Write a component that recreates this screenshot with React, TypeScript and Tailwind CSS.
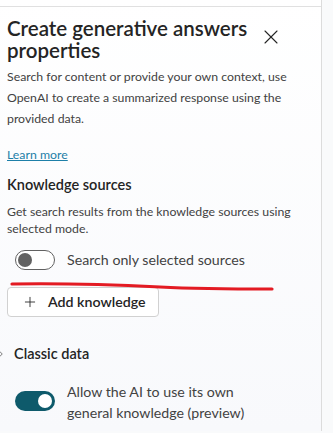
import { X, Plus, ChevronRight } from "lucide-react";

function Toggle({ on }: { on: boolean }) {
  return on ? (
    <span className="flex h-5 w-10 shrink-0 items-center justify-end rounded-full bg-[#0e5a6b] px-[3px]">
      <span className="size-[14px] rounded-full bg-white" />
    </span>
  ) : (
    <span className="flex h-5 w-10 shrink-0 items-center rounded-full border border-[#616161] bg-white px-[2px]">
      <span className="size-[14px] rounded-full bg-[#616161]" />
    </span>
  );
}

export default function App() {
  return (
    <div className="flex h-[433px] w-[333px] overflow-hidden bg-[#f9fafb] font-['Lato',sans-serif] text-[#242424]">
      <div className="relative h-[431px] w-[322px] shrink-0 border-r border-[#dcdcdc] bg-gradient-to-b from-white to-[#f8f9fc]">
        <div className="h-[7px] border-b border-[#e0e0e0]" />
        <div className="flex items-start justify-between pl-[7px] pr-[38px] pt-[10px]">
          <h1 className="text-[20.5px] leading-[22px] font-semibold">Create generative answers properties</h1>
          <X className="mt-[8px] size-[24px] shrink-0" strokeWidth={1.1} />
        </div>
        <p className="mt-[5px] px-[7px] text-[12.3px] leading-[21px] text-[#424242]">
          Search for content or provide your own context, use OpenAI to create a summarized response using the provided data.
        </p>
        <a className="mt-[17px] block px-[7px] text-[12.3px] leading-[18px] text-[#1d7fa8] underline">Learn more</a>
        <h2 className="mt-[11px] px-[7px] text-[14.5px] leading-[20px] font-semibold">Knowledge sources</h2>
        <p className="mt-[8px] px-[7px] text-[12.3px] leading-[17px] text-[#424242]">
          Get search results from the knowledge sources using selected mode.
        </p>
        <div className="mt-[13px] flex items-center gap-3 pl-[15px]">
          <Toggle on={false} />
          <span className="text-[14.2px] leading-[20px] text-[#424242]">Search only selected sources</span>
        </div>
        <button className="ml-[7px] mt-[17px] flex h-[30px] items-center gap-[10px] rounded-[4px] border border-[#d1d1d1] bg-white pl-[14px] pr-[12px] text-[14.2px] font-semibold">
          <Plus className="size-[16px]" strokeWidth={1.3} />
          Add knowledge
        </button>
        <div className="mt-[27px] flex items-center gap-[8px]">
          <ChevronRight className="-ml-[4px] size-[10px] text-[#616161]" strokeWidth={2} />
          <span className="text-[14.5px] leading-[20px] font-semibold">Classic data</span>
        </div>
        <div className="mt-[17px] flex items-start gap-3 pl-[15px]">
          <span className="mt-[10px]"><Toggle on /></span>
          <span className="text-[14.2px] leading-[21px] text-[#424242]">Allow the AI to use its own<br />general knowledge (preview)</span>
        </div>
        <svg className="pointer-events-none absolute left-[10px] top-[280px]" width="266" height="14" viewBox="0 0 266 14">
          <path d="M2 4 C 60 3, 110 5, 150 7 S 220 9, 262 9" fill="none" stroke="#e31b23" strokeWidth="3.2" strokeLinecap="round" />
        </svg>
      </div>
      <div className="flex-1" />
    </div>
  );
}
